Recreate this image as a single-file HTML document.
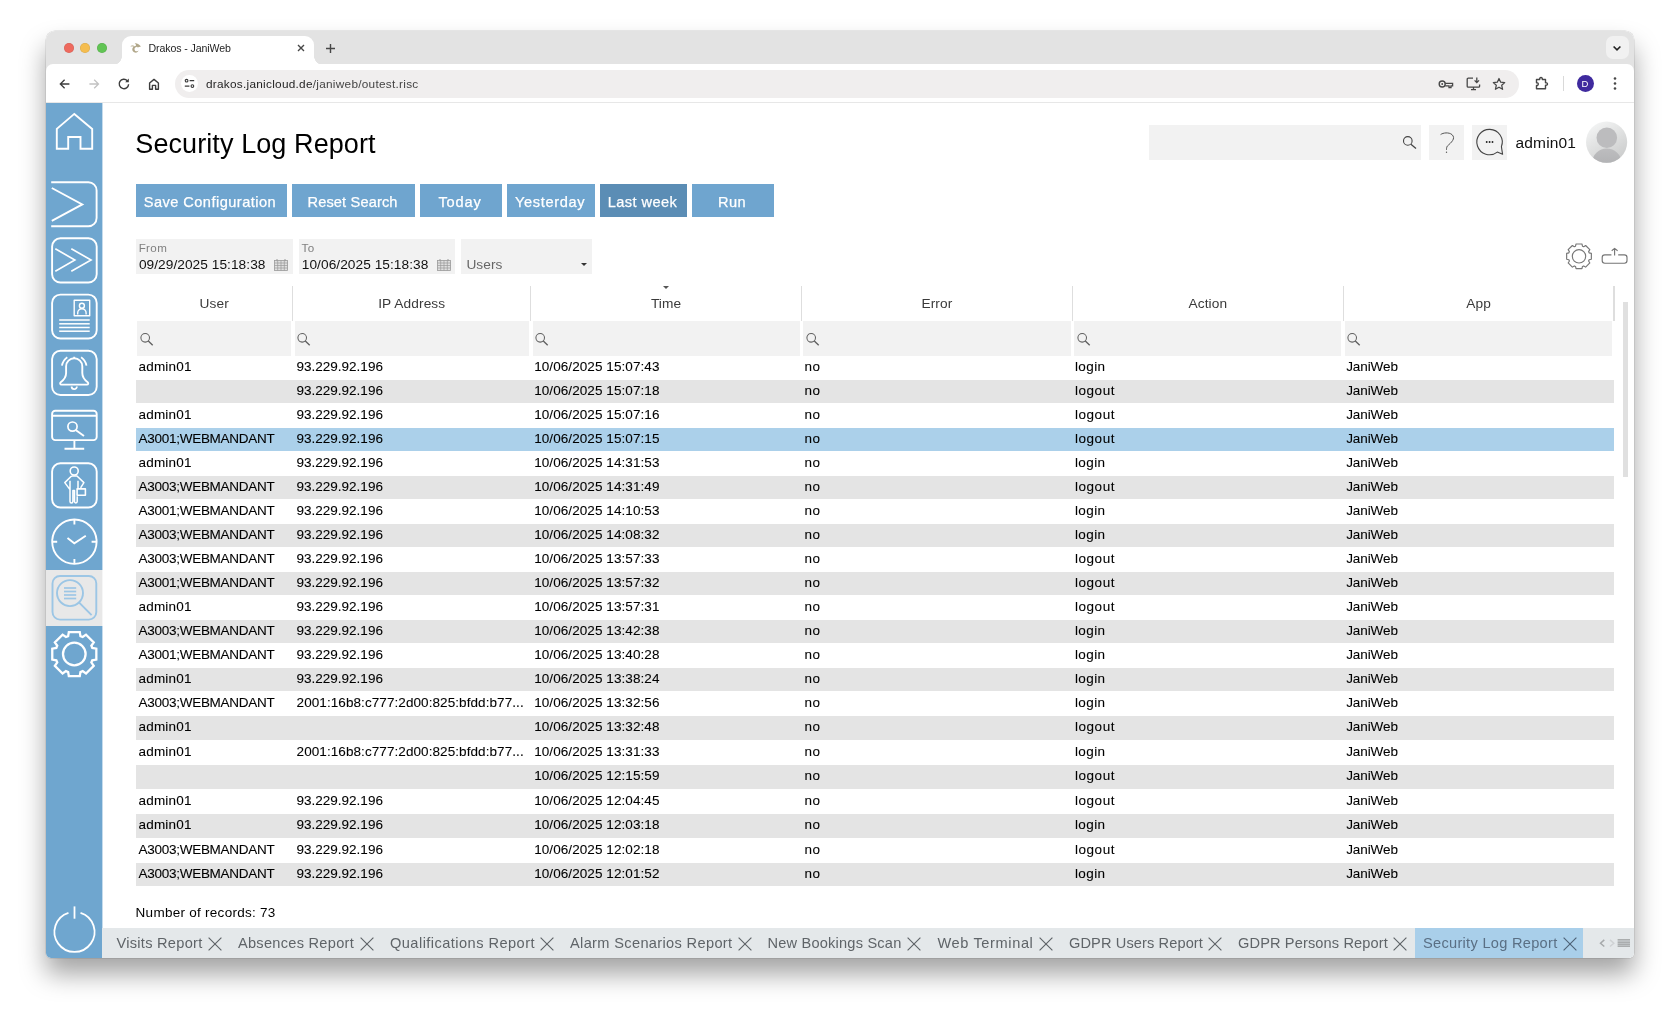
<!DOCTYPE html>
<html lang="en">
<head>
<meta charset="utf-8">
<title>Drakos - JaniWeb</title>
<style>
*{box-sizing:border-box;margin:0;padding:0}
html,body{width:1680px;height:1019px;overflow:hidden;background:#fff}
body{font-family:"Liberation Sans",sans-serif;color:#111;position:relative}
.win{position:absolute;left:46px;top:30.6px;width:1588px;height:927.4px;border-radius:9px 9px 5px 5px;overflow:hidden;background:#fff}
.in{position:absolute;left:0;top:-0.6px;width:1588px;height:928px;will-change:transform}
.shadow{position:absolute;left:46px;top:30.6px;width:1588px;height:927.4px;border-radius:9px 9px 5px 5px;
  box-shadow:0 0 0 0.5px rgba(0,0,0,.14),0 16px 26px rgba(0,0,0,.36)}
.abs{position:absolute}
/* chrome */
.tabstrip{position:absolute;left:0;top:0;width:100%;height:44px;background:#e3e3e3}
.tl{position:absolute;top:12.7px;width:10.2px;height:10.2px;border-radius:50%;box-shadow:inset 0 0 0 .5px rgba(0,0,0,.12)}
.tab{position:absolute;left:75.5px;top:5.8px;width:192.8px;height:29px;background:#fff;border-radius:9px 9px 0 0}
.tab:before,.tab:after{content:"";position:absolute;bottom:0;width:9px;height:9px}
.tab:before{left:-9px;background:radial-gradient(circle at 0 0,transparent 8.6px,#fff 9.2px)}
.tab:after{right:-9px;background:radial-gradient(circle at 100% 0,transparent 8.6px,#fff 9.2px)}
.tabtitle{position:absolute;left:27px;top:6.2px;font-size:10.6px;line-height:13px;color:#1f1f1f;letter-spacing:-.1px;white-space:nowrap}
.toolbar{position:absolute;left:0;top:34.3px;width:100%;height:38.5px;background:#fff;border-bottom:1px solid #e7e7e7;border-radius:7px 7px 0 0}
.omni{position:absolute;left:129.2px;top:5.3px;width:1344.1px;height:28px;border-radius:14px;background:#f0eeee}
.url{position:absolute;left:30.8px;top:7px;font-size:11.8px;color:#1f1f1f;letter-spacing:.27px;white-space:nowrap}
/* app */
.side{position:absolute;left:0;top:73px;width:56.2px;height:855px;background:#6fa6cf}
.side svg{position:absolute;overflow:visible}
.main{position:absolute;left:56px;top:73px;right:0;bottom:0;background:#fff}
.title{position:absolute;left:89.3px;top:98.3px;font-size:27px;line-height:32px;letter-spacing:.09px;color:#000;white-space:nowrap}
.btn{position:absolute;top:154px;height:33px;background:#6fa5cf;color:#fff;font-size:14.6px;line-height:36.4px;text-align:left;white-space:nowrap;-webkit-text-stroke:.25px #fff}
.btn.dark{background:#5b8db5}
.fld{position:absolute;top:209px;height:34.5px;background:#f2f2f2}
.fld .lab{position:absolute;left:3px;top:2.2px;font-size:11.6px;color:#808080;letter-spacing:.35px}
.fld .val{position:absolute;left:3.2px;top:17.6px;font-size:13.7px;color:#111;letter-spacing:.37px;white-space:nowrap}
/* table */
.tbl{position:absolute;left:0;top:0;width:1588px;height:900px;font-size:13.5px}
.th{position:absolute;top:255px;height:36px;line-height:37.8px;text-align:center;color:#3a3a3a;font-size:13.7px;letter-spacing:.12px}
.vsep{position:absolute;top:255.6px;height:35.2px;width:1.2px;background:#dedede}
.fc{position:absolute;top:291px;height:35.3px;background:#f2f2f2}
.fc .mag{position:absolute;left:2.4px;top:10.6px}
.sortarrow{position:absolute;left:617.3px;top:256px;width:0;height:0;border-left:3px solid transparent;border-right:3px solid transparent;border-top:3px solid #555}
.tr{position:absolute;left:90px;width:1478px;white-space:nowrap;color:#000;line-height:21.6px;-webkit-text-stroke:.09px #000}
.tr span{position:absolute;top:0}
.tr.odd{background:#e4e4e4}
.tr.sel{background:#abd0ea}
.c-user{letter-spacing:.05px}
.c-ip,.c-time{letter-spacing:.37px}
.c-err,.c-act,.c-app{letter-spacing:.3px}
.foot{position:absolute;left:89.6px;top:874.3px;font-size:13.5px;line-height:18px;letter-spacing:.27px;color:#000;white-space:nowrap}
.btabs{position:absolute;left:56px;top:898px;right:0;height:30px;background:#e4e8ea}
.bt{position:absolute;top:0;height:30px;line-height:30px;font-size:14.6px;color:#5f6468;white-space:nowrap;letter-spacing:.32px}
.bt svg{position:absolute;top:8.5px}
.bt.act{background:#a9cfea;color:#5a6f84}
</style>
</head>
<body>
<div class="shadow"></div>
<div class="win"><div class="in">

<div class="tabstrip">
  <div class="tl" style="left:17.5px;background:#ee6a5e"></div>
  <div class="tl" style="left:33.8px;background:#f5bd4f"></div>
  <div class="tl" style="left:50.7px;background:#61c454"></div>
  <div class="tab">
    <svg class="abs" style="left:2.5px;top:2.4px" width="24" height="20" viewBox="0 0 24 20"><g fill="#b1a78a"><path d="M10.300 8.300C7.600 9.600 7.500 13.600 10.800 14.600c1.700.5 3.300-.6 3.800-2.100-1.300 1.200-3.600.9-4-.8-.4-1.400.5-2.500 2-2.700l.6-1.300z"/><path d="M10.700 5.200c2.600-.2 4.800 1.100 6.200 3.200l-3.300 1.200c-.3-.9-1-1.500-1.900-1.700 .6-.8.200-1.900-1-2.700z"/><path d="M6.700 8.100c.8-1 2.400-1.100 3.600-.2l-.5 1c-1-.5-2-.6-3.100-.1z" opacity=".8"/></g></svg>
    <div class="tabtitle">Drakos - JaniWeb</div>
    <svg class="abs" style="left:175.6px;top:8.6px" width="8" height="8" viewBox="0 0 8 8"><path d="M1 1l6 6M7 1l-6 6" stroke="#474747" stroke-width="1.35" fill="none"/></svg>
  </div>
  <svg class="abs" style="left:279.3px;top:12.6px" width="11" height="11" viewBox="0 0 11 11"><path d="M5.5 1v9M1 5.5h9" stroke="#474747" stroke-width="1.4" fill="none"/></svg>
  <div class="abs" style="left:1559.7px;top:6.4px;width:23px;height:23px;border-radius:7px;background:#f1f1f1"></div>
  <svg class="abs" style="left:1566.2px;top:14.6px" width="10" height="7" viewBox="0 0 10 7"><path d="M1.6 1.5l3.4 3.4 3.4-3.4" stroke="#222" stroke-width="1.6" fill="none"/></svg>
</div>
<div class="toolbar">
  <svg class="abs" style="left:12.2px;top:12.4px" width="14" height="14" viewBox="0 0 14 14"><path d="M11.4 7H2.5M6.6 2.700L2.300 7l4.300 4.300" stroke="#3c3c3c" stroke-width="1.3" fill="none"/></svg>
  <svg class="abs" style="left:41.200px;top:12.400px" width="14" height="14" viewBox="0 0 14 14"><path d="M2.400 7h9M7.200 2.700L11.500 7l-4.300 4.300" stroke="#c2c2c2" stroke-width="1.300" fill="none"/></svg>
  <svg class="abs" style="left:71.200px;top:12.400px" width="14" height="14" viewBox="0 0 14 14"><path d="M11.6 7.2A4.7 4.7 0 1 1 10.3 3.7" stroke="#3c3c3c" stroke-width="1.4" fill="none"/><path d="M11.8 1.6v3.6H8.2z" fill="#3c3c3c"/></svg>
  <svg class="abs" style="left:100.800px;top:12.300px" width="14" height="14" viewBox="0 0 14 14"><path d="M2.6 12.2V6L7 2.4 11.4 6v6.2H8.6V8.4H5.4v3.8z" stroke="#3c3c3c" stroke-width="1.4" fill="none" stroke-linejoin="round"/></svg>
  <div class="omni">
    <div class="abs" style="left:5.6px;top:5.8px;width:16.8px;height:16.8px;border-radius:50%;background:#fff"></div>
    <svg class="abs" style="left:8.6px;top:8.9px" width="11" height="11" viewBox="0 0 11 11"><circle cx="2.6" cy="2.7" r="1.35" fill="none" stroke="#3a3a3a" stroke-width="1.1"/><path d="M5.6 2.7h4.6M.8 8.1h4.6" stroke="#3a3a3a" stroke-width="1.2"/><circle cx="8.4" cy="8.1" r="1.35" fill="none" stroke="#3a3a3a" stroke-width="1.1"/></svg>
    <div class="url">drakos.janicloud.de<span style="color:#444">/janiweb/outest.risc</span></div>
    <!-- key -->
    <svg class="abs" style="left:1263.2px;top:8px" width="16" height="12" viewBox="0 0 16 12"><circle cx="4.2" cy="6" r="3" fill="none" stroke="#474747" stroke-width="1.4"/><circle cx="4.2" cy="6" r=".9" fill="#474747"/><path d="M7.2 5.3h7.4v2.6h-1.6v1.6h-2v-1.6H7.2" fill="none" stroke="#474747" stroke-width="1.3"/></svg>
    <!-- install -->
    <svg class="abs" style="left:1290.6px;top:7px" width="15" height="14" viewBox="0 0 15 14"><path d="M7 1.2H2.2a1 1 0 0 0-1 1v7a1 1 0 0 0 1 1h10.400a1 1 0 0 0 1-1V7.500M5 12.600h5M7.500 10.300v2.200" fill="none" stroke="#474747" stroke-width="1.3"/><path d="M10.800.6v4.600M8.600 3.400l2.200 2.200 2.200-2.200" fill="none" stroke="#474747" stroke-width="1.3"/></svg>
    <!-- star -->
    <svg class="abs" style="left:1316.8px;top:7px" width="14" height="14" viewBox="0 0 14 14"><path d="M7 1.500l1.700 3.700 4 .4-3 2.700.9 4L7 10.200l-3.600 2.100.9-4-3-2.700 4-.4z" fill="none" stroke="#474747" stroke-width="1.25" stroke-linejoin="round"/></svg>
  </div>
  <!-- extensions -->
  <svg class="abs" style="left:1488px;top:11px" width="16" height="16" viewBox="0 0 16 16"><path d="M2.500 4.500h3.200c-.5-2.600 3.100-2.600 2.600 0h3.200v3.200c2.600-.5 2.600 3.100 0 2.600v3.400H2.500v-3.200c2.400.3 2.400-3.100 0-2.800z" fill="none" stroke="#474747" stroke-width="1.4" stroke-linejoin="round"/></svg>
  <div class="abs" style="left:1517px;top:11.5px;width:1px;height:15px;background:#d9d9d9"></div>
  <div class="abs" style="left:1530.5px;top:10.5px;width:17px;height:17px;border-radius:50%;background:#3f2a9e;color:#fff;font-size:9.500px;line-height:17px;text-align:center">D</div>
  <svg class="abs" style="left:1567px;top:11.5px" width="4" height="15" viewBox="0 0 4 15"><circle cx="2" cy="2.500" r="1.300" fill="#474747"/><circle cx="2" cy="7.500" r="1.300" fill="#474747"/><circle cx="2" cy="12.500" r="1.300" fill="#474747"/></svg>
</div>

<div class="side">
<div class="abs" style="left:0;top:467px;width:56.2px;height:56px;background:#e8e8e8"></div>
<div class="abs" style="left:56px;top:0;width:1px;height:855px;background:rgba(111,166,207,.4)"></div>
<div class="abs" style="left:56px;top:467px;width:1px;height:56px;background:#f6f6f6"></div>
<svg style="left:0;top:0" width="56.5" height="855" viewBox="46 103 56.5 855">
<g stroke="#fff" fill="none" stroke-width="1.9" stroke-linejoin="miter">
<path d="M74.3 113.9 L92.2 128.9 V148.8 H80.5 V137 H68.2 V148.8 H56.8 V128.9 Z"/>
</g>
<g stroke="#fff" fill="none" stroke-width="1.9" stroke-linecap="butt" stroke-linejoin="round">
<path d="M51.2 182.2 H88.4 a8.2 8.2 0 0 1 8.2 8.2 V218 a8.2 8.2 0 0 1 -8.2 8.2 H51.2"/>
<path d="M51.8 188 L82.3 204.4 L51.8 220.9" stroke-linejoin="miter"/>
<rect x="52.1" y="238.3" width="44.6" height="44.2" rx="8.3"/>
<path d="M55.3 248.7 L74.9 260 L55.3 271.2 M71.3 248.7 L91.1 260 L71.3 271.2" stroke-linejoin="miter" stroke-width="1.6"/>
<rect x="52.1" y="294.6" width="44.6" height="43.9" rx="8.3"/>
<rect x="74.2" y="300.3" width="15.500" height="15.500" stroke-width="1.400"/>
<circle cx="81.9" cy="305.7" r="2.500" stroke-width="1.400"/>
<path d="M77.7 314.600 v-1.600 a4.200 4.200 0 0 1 8.400 0 v1.600" stroke-width="1.400"/>
<path d="M59.2 320 H89.7" stroke-width="1.500"/>
<path d="M59.2 323.8 H89.7" stroke-width="1.500"/>
<path d="M59.2 327.5 H89.7" stroke-width="1.500"/>
<path d="M59.2 331.2 H89.7" stroke-width="1.500"/>
<rect x="52.1" y="350.8" width="44.6" height="44.2" rx="8.3"/>
<path d="M66.100 366.400 a8.100 8.100 0 0 1 16.200 0 V373 c0 4 1.800 6.600 5.400 9.200 c1 .8 .6 2.400 -.8 2.400 H61.500 c-1.400 0 -1.800 -1.600 -.8 -2.400 c3.600 -2.600 5.400 -5.200 5.400 -9.200 Z M74.200 356.800 v1.500" stroke-width="1.900"/>
<path d="M71.600 386.500 a2.650 2.650 0 0 0 5.300 0" stroke-width="1.800"/>
<path d="M61.900 365.600 c.8 -3.600 2.600 -6.400 5.400 -8.300 M86.500 365.600 c-.8 -3.600 -2.600 -6.400 -5.400 -8.300" stroke-width="1.800"/>
<rect x="52.1" y="410.8" width="44.6" height="29.3" rx="3.2"/>
<path d="M52.100 415.800 H96.700 M74.400 440.800 V448.700 M64.500 448.700 H84.200"/>
<circle cx="72.500" cy="426.600" r="4.600" stroke-width="1.700"/>
<path d="M76 430.200 L84 436" stroke-width="1.900"/>
<rect x="52.100" y="463.300" width="44.600" height="44.200" rx="8.3"/>
<circle cx="74.200" cy="471" r="4" stroke-width="1.600"/>
<path d="M71.500 476 L64.800 482.600 L70 489.600 V501.600 a1.450 1.450 0 0 0 2.900 0 V490.600 h1.600 V501.600 a1.350 1.350 0 0 0 2.700 0 V496.200 M71.500 476 H77 L83.900 482.600 L80.600 487.800 M70 480.800 V489.600 M78 480.800 V488" stroke-width="1.500" stroke-linejoin="round"/>
<rect x="77.100" y="488.900" width="8.300" height="6.300" stroke-width="1.600"/>
<circle cx="74.400" cy="541.700" r="22.200"/>
<path d="M74.400 519.500 v5 M74.400 563.900 v-5 M52.200 541.700 h5 M96.600 541.700 h-5"/>
<path d="M67.500 538 L74.300 543.300 L85.800 535.800" stroke-linejoin="miter"/>
</g>
<g stroke="#9cc6e5" fill="none" stroke-width="1.900">
<rect x="52.500" y="576" width="43.800" height="43.600" rx="7.500"/>
<circle cx="70" cy="593.100" r="13"/>
<path d="M79.200 602.600 L91.600 615.200"/>
<path d="M64 588 H76.200" stroke-width="1.700"/>
<path d="M64 591.5 H76.200" stroke-width="1.700"/>
<path d="M64 595 H76.200" stroke-width="1.700"/>
<path d="M64 598.5 H76.200" stroke-width="1.700"/>
</g>
<g stroke="#fff" fill="none" stroke-width="2.3" stroke-linejoin="miter">
<path d="M68.15 636.12 L68.83 632.07 L79.77 632.07 L80.45 636.12 L82.66 637.04 L86.01 634.65 L93.75 642.39 L91.36 645.74 L92.28 647.95 L96.33 648.63 L96.33 659.57 L92.28 660.25 L91.36 662.46 L93.75 665.81 L86.01 673.55 L82.66 671.16 L80.45 672.08 L79.77 676.13 L68.83 676.13 L68.15 672.08 L65.94 671.16 L62.59 673.55 L54.85 665.81 L57.24 662.46 L56.32 660.25 L52.27 659.57 L52.27 648.63 L56.32 647.95 L57.24 645.74 L54.85 642.39 L62.59 634.65 L65.94 637.04Z"/>
<circle cx="74.300" cy="654" r="11.300"/>
</g>
<g stroke="#fff" fill="none" stroke-width="1.800">
<path d="M80.53 912.78 A20.05 20.05 0 1 1 68.47 912.78"/>
<path d="M74.500 906.400 V918.700"/>
</g>
</svg>
</div>
<div class="title">Security Log Report</div>
<div class="abs" style="left:1103px;top:95px;width:272px;height:34.5px;background:#f2f2f2"></div>
<svg class="abs" style="left:1355px;top:104px" width="17" height="17" viewBox="1401 134 17 17"><circle cx="1407.8" cy="140.9" r="4.300" fill="none" stroke="#444" stroke-width="1.100"/><path d="M1410.900 144.200 L1416 148.400" stroke="#444" stroke-width="1.300"/></svg>
<div class="abs" style="left:1383.3px;top:95px;width:34.700px;height:34.500px;background:#f2f2f2"></div>
<svg class="abs" style="left:1383px;top:95px" width="36" height="36" viewBox="1429 125 36 36"><path d="M1440.600 134.600 C1443 132.700 1448.800 132 1452 134.600 C1456.200 138.400 1451 142.800 1447.400 146 C1446.600 147 1446.500 148.400 1446.500 149.800" fill="none" stroke="#555" stroke-width="1"/><circle cx="1446.500" cy="152.300" r=".7" fill="#555"/></svg>
<div class="abs" style="left:1426.3px;top:95px;width:34.900px;height:34.500px;background:#f2f2f2"></div>
<svg class="abs" style="left:1426px;top:95px" width="36" height="36" viewBox="1472 125 36 36"><path d="M1497.300 152.100 A12.700 12.700 0 1 1 1501.400 146.600 L1502.600 154.300 Z" fill="none" stroke="#444" stroke-width="1.100" stroke-linejoin="round"/><circle cx="1486.700" cy="142" r=".95" fill="#222"/><circle cx="1489.600" cy="142" r=".95" fill="#222"/><circle cx="1492.500" cy="142" r=".95" fill="#222"/></svg>
<div class="abs" style="left:1469.6px;top:102.5px;font-size:15.500px;line-height:19px;letter-spacing:0.133px;color:#111;white-space:nowrap">admin01</div>
<svg class="abs" style="left:1539px;top:91px" width="43" height="43" viewBox="1585 121 43 43"><defs><linearGradient id="avg" x1="0.200" y1="0" x2="0.800" y2="1"><stop offset="0" stop-color="#f4f5f5"/><stop offset="1" stop-color="#c9caca"/></linearGradient><linearGradient id="avb" x1="0" y1="0" x2="0" y2="1"><stop offset="0" stop-color="#bdbdbf"/><stop offset="1" stop-color="#aaabad"/></linearGradient><clipPath id="avc"><circle cx="1606.600" cy="142.100" r="20.600"/></clipPath></defs><circle cx="1606.600" cy="142.100" r="20.600" fill="url(#avg)"/><g clip-path="url(#avc)"><circle cx="1606.800" cy="137.700" r="10.300" fill="#bcbcbe"/><ellipse cx="1606.800" cy="162" rx="14.300" ry="13.400" fill="url(#avb)"/></g></svg>
<div class="btn" style="left:90px;width:151px;letter-spacing:0.459px;padding-left:7.7px">Save Configuration</div>
<div class="btn" style="left:245.8px;width:123.0px;letter-spacing:0.14px;padding-left:15.7px">Reset Search</div>
<div class="btn" style="left:374px;width:82px;letter-spacing:0.849px;padding-left:18.4px">Today</div>
<div class="btn" style="left:461px;width:87.5px;letter-spacing:0.636px;padding-left:8.0px">Yesterday</div>
<div class="btn dark" style="left:553.5px;width:87.5px;letter-spacing:0.409px;padding-left:8.3px">Last week</div>
<div class="btn" style="left:646px;width:82px;letter-spacing:0.473px;padding-left:26.0px">Run</div>
<div class="fld" style="left:89.7px;width:156.900px"><div class="lab">From</div><div class="val" style="letter-spacing:0.053px">09/29/2025 15:18:38</div><svg class="abs" style="left:138.6px;top:20px" width="14" height="12" viewBox="0 0 14 12"><rect x=".5" y="1.500" width="13" height="10" fill="#e0e0e0" stroke="#9a9a9a" stroke-width=".8"/><path d="M.5 4h13M.5 6.500h13M.5 9h13M3.700 1.500v10M7 1.500v10M10.300 1.500v10" stroke="#9a9a9a" stroke-width=".7" fill="none"/><path d="M3 0v2.200M11 0v2.200" stroke="#9a9a9a" stroke-width="1"/></svg></div>
<div class="fld" style="left:252.6px;width:156.900px"><div class="lab">To</div><div class="val" style="left:3.2px;letter-spacing:0.053px">10/06/2025 15:18:38</div><svg class="abs" style="left:138.4px;top:20px" width="14" height="12" viewBox="0 0 14 12"><rect x=".5" y="1.500" width="13" height="10" fill="#e0e0e0" stroke="#9a9a9a" stroke-width=".8"/><path d="M.5 4h13M.5 6.500h13M.5 9h13M3.700 1.500v10M7 1.500v10M10.300 1.500v10" stroke="#9a9a9a" stroke-width=".7" fill="none"/><path d="M3 0v2.200M11 0v2.200" stroke="#9a9a9a" stroke-width="1"/></svg></div>
<div class="fld" style="left:415.4px;width:130.600px"><div class="val" style="left:5px;color:#666;letter-spacing:0.067px">Users</div><div class="abs" style="left:119.500px;top:24px;width:0;height:0;border-left:3.500px solid transparent;border-right:3.500px solid transparent;border-top:3.500px solid #333"></div></div>
<svg class="abs" style="left:1514px;top:210px" width="74" height="34" viewBox="1560 240 74 34"><g fill="none" stroke="#767676" stroke-width="1.15" stroke-linejoin="round"><path d="M1575.53 246.18 L1576.04 243.95 L1581.96 243.95 L1582.47 246.18 L1583.71 246.69 L1585.64 245.47 L1589.83 249.66 L1588.61 251.59 L1589.12 252.83 L1591.35 253.34 L1591.35 259.26 L1589.12 259.77 L1588.61 261.01 L1589.83 262.94 L1585.64 267.13 L1583.71 265.91 L1582.47 266.42 L1581.96 268.65 L1576.04 268.65 L1575.53 266.42 L1574.29 265.91 L1572.36 267.13 L1568.17 262.94 L1569.39 261.01 L1568.88 259.77 L1566.65 259.26 L1566.65 253.34 L1568.88 252.83 L1569.39 251.59 L1568.17 249.66 L1572.36 245.47 L1574.29 246.69Z"/><circle cx="1579" cy="256.300" r="6.700"/><path d="M1611.400 254.900 H1604.800 a2.600 2.600 0 0 0 -2.600 2.600 V260.600 a2.600 2.600 0 0 0 2.600 2.600 H1624.400 a2.600 2.600 0 0 0 2.600 -2.600 V257.500 a2.600 2.600 0 0 0 -2.600 -2.600 H1618.200 M1614.600 255.400 V248.500 M1611.700 250.700 L1614.600 248.400 L1617.600 250.700"/></g></svg>
<div class="abs" style="left:1577.3px;top:271.5px;width:4.600px;height:175.500px;background:#e0e0e0"></div>
<div class="tbl">
<div class="th" style="left:89.6px;width:157.2px">User</div>
<div class="th" style="left:246.8px;width:237.9px">IP Address</div>
<div class="th" style="left:484.7px;width:270.8px">Time</div>
<div class="th" style="left:755.5px;width:270.9px">Error</div>
<div class="th" style="left:1026.4px;width:270.9px">Action</div>
<div class="th" style="left:1297.3px;width:270.7px">App</div>
<div class="vsep" style="left:246.2px"></div>
<div class="vsep" style="left:484.1px"></div>
<div class="vsep" style="left:754.9px"></div>
<div class="vsep" style="left:1025.8px"></div>
<div class="vsep" style="left:1296.7px"></div>
<div class="vsep" style="left:1567.4px"></div>
<div class="sortarrow"></div>
<div class="fc" style="left:91.4px;width:153.6px"><svg class="mag" width="14" height="14" viewBox="0 0 14 14"><circle cx="5.200" cy="5.800" r="4.300" fill="none" stroke="#606060" stroke-width="1.05"/><path d="M8.300 9 L12.700 13.300" stroke="#606060" stroke-width="1.350" fill="none"/></svg></div>
<div class="fc" style="left:248.6px;width:234.3px"><svg class="mag" width="14" height="14" viewBox="0 0 14 14"><circle cx="5.200" cy="5.800" r="4.300" fill="none" stroke="#606060" stroke-width="1.05"/><path d="M8.300 9 L12.700 13.300" stroke="#606060" stroke-width="1.350" fill="none"/></svg></div>
<div class="fc" style="left:486.5px;width:267.2px"><svg class="mag" width="14" height="14" viewBox="0 0 14 14"><circle cx="5.200" cy="5.800" r="4.300" fill="none" stroke="#606060" stroke-width="1.05"/><path d="M8.300 9 L12.700 13.300" stroke="#606060" stroke-width="1.350" fill="none"/></svg></div>
<div class="fc" style="left:757.3px;width:267.3px"><svg class="mag" width="14" height="14" viewBox="0 0 14 14"><circle cx="5.200" cy="5.800" r="4.300" fill="none" stroke="#606060" stroke-width="1.05"/><path d="M8.300 9 L12.700 13.300" stroke="#606060" stroke-width="1.350" fill="none"/></svg></div>
<div class="fc" style="left:1028.2px;width:267.3px"><svg class="mag" width="14" height="14" viewBox="0 0 14 14"><circle cx="5.200" cy="5.800" r="4.300" fill="none" stroke="#606060" stroke-width="1.05"/><path d="M8.300 9 L12.700 13.300" stroke="#606060" stroke-width="1.350" fill="none"/></svg></div>
<div class="fc" style="left:1299.1px;width:267.1px"><svg class="mag" width="14" height="14" viewBox="0 0 14 14"><circle cx="5.200" cy="5.800" r="4.300" fill="none" stroke="#606060" stroke-width="1.05"/><path d="M8.300 9 L12.700 13.300" stroke="#606060" stroke-width="1.350" fill="none"/></svg></div>
<div class="tr even" style="top:326px;height:23.2px"><span style="left:2.6px;letter-spacing:0.172px">admin01</span><span style="left:160.6px;letter-spacing:-0.003px">93.229.92.196</span><span style="left:398.2px;letter-spacing:0.075px">10/06/2025 15:07:43</span><span style="left:668.4px;letter-spacing:0.634px">no</span><span style="left:939.0px;letter-spacing:0.374px">login</span><span style="left:1210.2px;letter-spacing:-0.097px">JaniWeb</span></div>
<div class="tr odd" style="top:350px;height:23.2px"><span style="left:160.6px;letter-spacing:-0.003px">93.229.92.196</span><span style="left:398.2px;letter-spacing:0.075px">10/06/2025 15:07:18</span><span style="left:668.4px;letter-spacing:0.634px">no</span><span style="left:939.0px;letter-spacing:0.534px">logout</span><span style="left:1210.2px;letter-spacing:-0.097px">JaniWeb</span></div>
<div class="tr even" style="top:374px;height:23.2px"><span style="left:2.6px;letter-spacing:0.172px">admin01</span><span style="left:160.6px;letter-spacing:-0.003px">93.229.92.196</span><span style="left:398.2px;letter-spacing:0.075px">10/06/2025 15:07:16</span><span style="left:668.4px;letter-spacing:0.634px">no</span><span style="left:939.0px;letter-spacing:0.534px">logout</span><span style="left:1210.2px;letter-spacing:-0.097px">JaniWeb</span></div>
<div class="tr sel" style="top:398px;height:23.2px"><span style="left:2.6px;letter-spacing:-0.281px">A3001;WEBMANDANT</span><span style="left:160.6px;letter-spacing:-0.003px">93.229.92.196</span><span style="left:398.2px;letter-spacing:0.075px">10/06/2025 15:07:15</span><span style="left:668.4px;letter-spacing:0.634px">no</span><span style="left:939.0px;letter-spacing:0.534px">logout</span><span style="left:1210.2px;letter-spacing:-0.097px">JaniWeb</span></div>
<div class="tr even" style="top:422px;height:23.2px"><span style="left:2.6px;letter-spacing:0.172px">admin01</span><span style="left:160.6px;letter-spacing:-0.003px">93.229.92.196</span><span style="left:398.2px;letter-spacing:0.075px">10/06/2025 14:31:53</span><span style="left:668.4px;letter-spacing:0.634px">no</span><span style="left:939.0px;letter-spacing:0.374px">login</span><span style="left:1210.2px;letter-spacing:-0.097px">JaniWeb</span></div>
<div class="tr odd" style="top:446px;height:23.2px"><span style="left:2.6px;letter-spacing:-0.281px">A3003;WEBMANDANT</span><span style="left:160.6px;letter-spacing:-0.003px">93.229.92.196</span><span style="left:398.2px;letter-spacing:0.075px">10/06/2025 14:31:49</span><span style="left:668.4px;letter-spacing:0.634px">no</span><span style="left:939.0px;letter-spacing:0.534px">logout</span><span style="left:1210.2px;letter-spacing:-0.097px">JaniWeb</span></div>
<div class="tr even" style="top:470px;height:23.2px"><span style="left:2.6px;letter-spacing:-0.281px">A3001;WEBMANDANT</span><span style="left:160.6px;letter-spacing:-0.003px">93.229.92.196</span><span style="left:398.2px;letter-spacing:0.075px">10/06/2025 14:10:53</span><span style="left:668.4px;letter-spacing:0.634px">no</span><span style="left:939.0px;letter-spacing:0.374px">login</span><span style="left:1210.2px;letter-spacing:-0.097px">JaniWeb</span></div>
<div class="tr odd" style="top:494px;height:23.2px"><span style="left:2.6px;letter-spacing:-0.281px">A3003;WEBMANDANT</span><span style="left:160.6px;letter-spacing:-0.003px">93.229.92.196</span><span style="left:398.2px;letter-spacing:0.075px">10/06/2025 14:08:32</span><span style="left:668.4px;letter-spacing:0.634px">no</span><span style="left:939.0px;letter-spacing:0.374px">login</span><span style="left:1210.2px;letter-spacing:-0.097px">JaniWeb</span></div>
<div class="tr even" style="top:518px;height:23.2px"><span style="left:2.6px;letter-spacing:-0.281px">A3003;WEBMANDANT</span><span style="left:160.6px;letter-spacing:-0.003px">93.229.92.196</span><span style="left:398.2px;letter-spacing:0.075px">10/06/2025 13:57:33</span><span style="left:668.4px;letter-spacing:0.634px">no</span><span style="left:939.0px;letter-spacing:0.534px">logout</span><span style="left:1210.2px;letter-spacing:-0.097px">JaniWeb</span></div>
<div class="tr odd" style="top:542px;height:23.2px"><span style="left:2.6px;letter-spacing:-0.281px">A3001;WEBMANDANT</span><span style="left:160.6px;letter-spacing:-0.003px">93.229.92.196</span><span style="left:398.2px;letter-spacing:0.075px">10/06/2025 13:57:32</span><span style="left:668.4px;letter-spacing:0.634px">no</span><span style="left:939.0px;letter-spacing:0.534px">logout</span><span style="left:1210.2px;letter-spacing:-0.097px">JaniWeb</span></div>
<div class="tr even" style="top:566px;height:23.2px"><span style="left:2.6px;letter-spacing:0.172px">admin01</span><span style="left:160.6px;letter-spacing:-0.003px">93.229.92.196</span><span style="left:398.2px;letter-spacing:0.075px">10/06/2025 13:57:31</span><span style="left:668.4px;letter-spacing:0.634px">no</span><span style="left:939.0px;letter-spacing:0.534px">logout</span><span style="left:1210.2px;letter-spacing:-0.097px">JaniWeb</span></div>
<div class="tr odd" style="top:590px;height:23.2px"><span style="left:2.6px;letter-spacing:-0.281px">A3003;WEBMANDANT</span><span style="left:160.6px;letter-spacing:-0.003px">93.229.92.196</span><span style="left:398.2px;letter-spacing:0.075px">10/06/2025 13:42:38</span><span style="left:668.4px;letter-spacing:0.634px">no</span><span style="left:939.0px;letter-spacing:0.374px">login</span><span style="left:1210.2px;letter-spacing:-0.097px">JaniWeb</span></div>
<div class="tr even" style="top:614px;height:23.2px"><span style="left:2.6px;letter-spacing:-0.281px">A3001;WEBMANDANT</span><span style="left:160.6px;letter-spacing:-0.003px">93.229.92.196</span><span style="left:398.2px;letter-spacing:0.075px">10/06/2025 13:40:28</span><span style="left:668.4px;letter-spacing:0.634px">no</span><span style="left:939.0px;letter-spacing:0.374px">login</span><span style="left:1210.2px;letter-spacing:-0.097px">JaniWeb</span></div>
<div class="tr odd" style="top:638px;height:23.2px"><span style="left:2.6px;letter-spacing:0.172px">admin01</span><span style="left:160.6px;letter-spacing:-0.003px">93.229.92.196</span><span style="left:398.2px;letter-spacing:0.075px">10/06/2025 13:38:24</span><span style="left:668.4px;letter-spacing:0.634px">no</span><span style="left:939.0px;letter-spacing:0.374px">login</span><span style="left:1210.2px;letter-spacing:-0.097px">JaniWeb</span></div>
<div class="tr even" style="top:662px;height:23.2px"><span style="left:2.6px;letter-spacing:-0.281px">A3003;WEBMANDANT</span><span style="left:160.6px;letter-spacing:0.078px">2001:16b8:c777:2d00:825:bfdd:b77...</span><span style="left:398.2px;letter-spacing:0.075px">10/06/2025 13:32:56</span><span style="left:668.4px;letter-spacing:0.634px">no</span><span style="left:939.0px;letter-spacing:0.374px">login</span><span style="left:1210.2px;letter-spacing:-0.097px">JaniWeb</span></div>
<div class="tr odd" style="top:686px;height:23.7px"><span style="left:2.6px;letter-spacing:0.172px">admin01</span><span style="left:398.2px;letter-spacing:0.075px">10/06/2025 13:32:48</span><span style="left:668.4px;letter-spacing:0.634px">no</span><span style="left:939.0px;letter-spacing:0.534px">logout</span><span style="left:1210.2px;letter-spacing:-0.097px">JaniWeb</span></div>
<div class="tr even" style="top:710.5px;height:23.7px"><span style="left:2.6px;letter-spacing:0.172px">admin01</span><span style="left:160.6px;letter-spacing:0.078px">2001:16b8:c777:2d00:825:bfdd:b77...</span><span style="left:398.2px;letter-spacing:0.075px">10/06/2025 13:31:33</span><span style="left:668.4px;letter-spacing:0.634px">no</span><span style="left:939.0px;letter-spacing:0.374px">login</span><span style="left:1210.2px;letter-spacing:-0.097px">JaniWeb</span></div>
<div class="tr odd" style="top:735px;height:23.7px"><span style="left:398.2px;letter-spacing:0.075px">10/06/2025 12:15:59</span><span style="left:668.4px;letter-spacing:0.634px">no</span><span style="left:939.0px;letter-spacing:0.534px">logout</span><span style="left:1210.2px;letter-spacing:-0.097px">JaniWeb</span></div>
<div class="tr even" style="top:759.5px;height:23.7px"><span style="left:2.6px;letter-spacing:0.172px">admin01</span><span style="left:160.6px;letter-spacing:-0.003px">93.229.92.196</span><span style="left:398.2px;letter-spacing:0.075px">10/06/2025 12:04:45</span><span style="left:668.4px;letter-spacing:0.634px">no</span><span style="left:939.0px;letter-spacing:0.534px">logout</span><span style="left:1210.2px;letter-spacing:-0.097px">JaniWeb</span></div>
<div class="tr odd" style="top:784px;height:23.7px"><span style="left:2.6px;letter-spacing:0.172px">admin01</span><span style="left:160.6px;letter-spacing:-0.003px">93.229.92.196</span><span style="left:398.2px;letter-spacing:0.075px">10/06/2025 12:03:18</span><span style="left:668.4px;letter-spacing:0.634px">no</span><span style="left:939.0px;letter-spacing:0.374px">login</span><span style="left:1210.2px;letter-spacing:-0.097px">JaniWeb</span></div>
<div class="tr even" style="top:808.5px;height:23.2px"><span style="left:2.6px;letter-spacing:-0.281px">A3003;WEBMANDANT</span><span style="left:160.6px;letter-spacing:-0.003px">93.229.92.196</span><span style="left:398.2px;letter-spacing:0.075px">10/06/2025 12:02:18</span><span style="left:668.4px;letter-spacing:0.634px">no</span><span style="left:939.0px;letter-spacing:0.534px">logout</span><span style="left:1210.2px;letter-spacing:-0.097px">JaniWeb</span></div>
<div class="tr odd" style="top:832.5px;height:23.5px"><span style="left:2.6px;letter-spacing:-0.281px">A3003;WEBMANDANT</span><span style="left:160.6px;letter-spacing:-0.003px">93.229.92.196</span><span style="left:398.2px;letter-spacing:0.075px">10/06/2025 12:01:52</span><span style="left:668.4px;letter-spacing:0.634px">no</span><span style="left:939.0px;letter-spacing:0.374px">login</span><span style="left:1210.2px;letter-spacing:-0.097px">JaniWeb</span></div>
</div>
<div class="foot">Number of records: 73</div>
<div class="btabs"></div>
<div class="bt" style="left:62.2px;top:898px;width:122.1px;padding-left:8.3px;letter-spacing:0.272px">Visits Report<svg style="left:100.3px" width="14" height="14" viewBox="0 0 14 14"><path d="M.6.6l12.800 12.800M13.400.6L.6 13.400" stroke="#5f6468" stroke-width="1.150" fill="none"/></svg></div>
<div class="bt" style="left:183.7px;top:898px;width:152.1px;padding-left:8.3px;letter-spacing:0.27px">Absences Report<svg style="left:130.3px" width="14" height="14" viewBox="0 0 14 14"><path d="M.6.6l12.800 12.800M13.400.6L.6 13.400" stroke="#5f6468" stroke-width="1.150" fill="none"/></svg></div>
<div class="bt" style="left:335.7px;top:898px;width:180.1px;padding-left:8.3px;letter-spacing:0.454px">Qualifications Report<svg style="left:158.3px" width="14" height="14" viewBox="0 0 14 14"><path d="M.6.6l12.800 12.800M13.400.6L.6 13.400" stroke="#5f6468" stroke-width="1.150" fill="none"/></svg></div>
<div class="bt" style="left:515.7px;top:898px;width:198.1px;padding-left:8.3px;letter-spacing:0.344px">Alarm Scenarios Report<svg style="left:176.3px" width="14" height="14" viewBox="0 0 14 14"><path d="M.6.6l12.800 12.800M13.400.6L.6 13.400" stroke="#5f6468" stroke-width="1.150" fill="none"/></svg></div>
<div class="bt" style="left:713.2px;top:898px;width:170.1px;padding-left:8.3px;letter-spacing:0.199px">New Bookings Scan<svg style="left:148.3px" width="14" height="14" viewBox="0 0 14 14"><path d="M.6.6l12.800 12.800M13.400.6L.6 13.400" stroke="#5f6468" stroke-width="1.150" fill="none"/></svg></div>
<div class="bt" style="left:883.2px;top:898px;width:131.6px;padding-left:8.3px;letter-spacing:0.609px">Web Terminal<svg style="left:109.8px" width="14" height="14" viewBox="0 0 14 14"><path d="M.6.6l12.800 12.800M13.400.6L.6 13.400" stroke="#5f6468" stroke-width="1.150" fill="none"/></svg></div>
<div class="bt" style="left:1014.7px;top:898px;width:169.1px;padding-left:8.3px;letter-spacing:0.107px">GDPR Users Report<svg style="left:147.3px" width="14" height="14" viewBox="0 0 14 14"><path d="M.6.6l12.800 12.800M13.400.6L.6 13.400" stroke="#5f6468" stroke-width="1.150" fill="none"/></svg></div>
<div class="bt" style="left:1183.7px;top:898px;width:185.1px;padding-left:8.3px;letter-spacing:0.125px">GDPR Persons Report<svg style="left:163.3px" width="14" height="14" viewBox="0 0 14 14"><path d="M.6.6l12.800 12.800M13.400.6L.6 13.400" stroke="#5f6468" stroke-width="1.150" fill="none"/></svg></div>
<div class="bt act" style="left:1369px;top:898px;width:168px;padding-left:8px;letter-spacing:0.29px">Security Log Report<svg style="left:147.5px" width="14" height="14" viewBox="0 0 14 14"><path d="M.6.6l12.800 12.800M13.400.6L.6 13.400" stroke="#4f6378" stroke-width="1.150" fill="none"/></svg></div>
<svg class="abs" style="left:1552px;top:906px" width="36" height="14" viewBox="1598 936 36 14"><path d="M1604.300 939.900 L1600.500 943.200 L1604.300 946.500" fill="none" stroke="#a6a9ab" stroke-width="1.500"/><path d="M1610 939.900 L1613.800 943.200 L1610 946.500" fill="none" stroke="#cfd2d4" stroke-width="1.500"/><path d="M1617.600 939.900h12.400M1617.600 942h12.400M1617.600 944.100h12.400M1617.600 946.200h12.400" stroke="#96999b" stroke-width="1.250"/></svg>
</div></div>
</body>
</html>
